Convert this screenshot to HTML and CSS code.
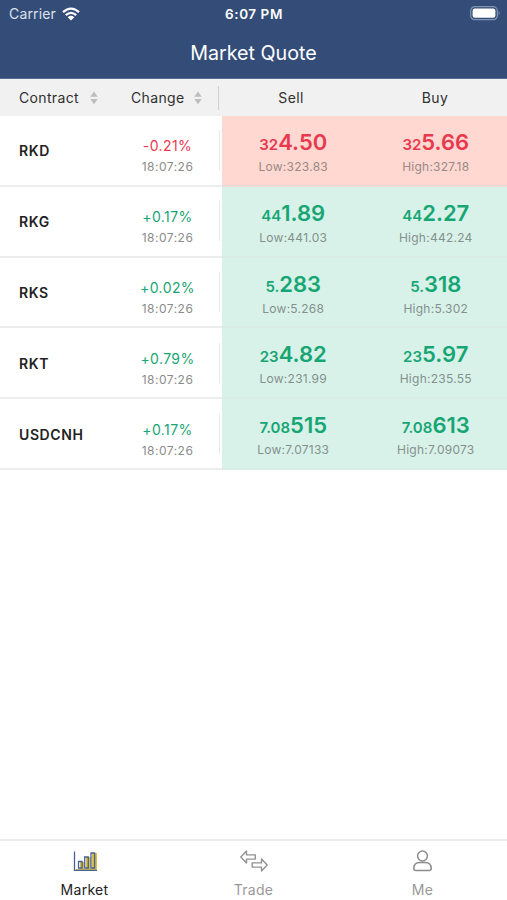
FILE: index.html
```
<!DOCTYPE html>
<html lang="en">
<head>
    <meta charset="UTF-8">
    <title>Market Quote</title>
    <meta name="viewport" content="width=device-width,initial-scale=1.0">
    <link rel="stylesheet" href="styles.css">
</head>
<body>
    <header class="header">
        <div class="status">
            <div class="carrier">
                <span>Carrier</span>
                <svg class="wifi" viewBox="0 0 18 14">
                    <path d="M1 5.2Q9-2 17 5.2M3.8 8.2Q9 3.6 14.2 8.2" fill="none" stroke="#fff" stroke-width="2.3"/>
                    <path d="M5.7 10.2Q9 7.4 12.3 10.2L9 13.6z" fill="#fff"/>
                </svg>
            </div>
            <div class="time">6:07 PM</div>
            <svg class="battery" viewBox="0 0 31 15">
                <rect x=".7" y=".7" width="26.6" height="13" rx="4" fill="none" stroke="#8294b5" stroke-width="1.2"/>
                <rect x="2.6" y="2.6" width="22.8" height="9.2" rx="2.2" fill="#fff"/>
                <path d="M28.6 5q2 2.2 0 4.4z" fill="#8294b5"/>
            </svg>
        </div>
        <h1 class="title">Market Quote</h1>
    </header>

    <div class="thead">
        <div class="th th-contract">Contract
            <svg class="sort" viewBox="0 0 8 14"><path d="M4 .5L7.7 5.8H.3zM4 13.2L.3 7.9h7.4z"/></svg>
        </div>
        <div class="th th-change">Change
            <svg class="sort" viewBox="0 0 8 14"><path d="M4 .5L7.7 5.8H.3zM4 13.2L.3 7.9h7.4z"/></svg>
        </div>
        <div class="th th-price">Sell</div>
        <div class="th th-price">Buy</div>
    </div>

    <ul class="list">
        <li class="row down">
            <div class="name">RKD</div>
            <div class="change"><p class="rate">-0.21%</p><p class="sub">18:07:26</p></div>
            <div class="prices">
                <div class="price"><p class="num"><small>32</small>4.50</p><p class="sub">Low:323.83</p></div>
                <div class="price"><p class="num"><small>32</small>5.66</p><p class="sub">High:327.18</p></div>
            </div>
        </li>
        <li class="row up">
            <div class="name">RKG</div>
            <div class="change"><p class="rate">+0.17%</p><p class="sub">18:07:26</p></div>
            <div class="prices">
                <div class="price"><p class="num"><small>44</small>1.89</p><p class="sub">Low:441.03</p></div>
                <div class="price"><p class="num"><small>44</small>2.27</p><p class="sub">High:442.24</p></div>
            </div>
        </li>
        <li class="row up">
            <div class="name">RKS</div>
            <div class="change"><p class="rate">+0.02%</p><p class="sub">18:07:26</p></div>
            <div class="prices">
                <div class="price"><p class="num"><small>5.</small>283</p><p class="sub">Low:5.268</p></div>
                <div class="price"><p class="num"><small>5.</small>318</p><p class="sub">High:5.302</p></div>
            </div>
        </li>
        <li class="row up">
            <div class="name">RKT</div>
            <div class="change"><p class="rate">+0.79%</p><p class="sub">18:07:26</p></div>
            <div class="prices">
                <div class="price"><p class="num"><small>23</small>4.82</p><p class="sub">Low:231.99</p></div>
                <div class="price"><p class="num"><small>23</small>5.97</p><p class="sub">High:235.55</p></div>
            </div>
        </li>
        <li class="row up">
            <div class="name">USDCNH</div>
            <div class="change"><p class="rate">+0.17%</p><p class="sub">18:07:26</p></div>
            <div class="prices">
                <div class="price"><p class="num"><small>7.08</small>515</p><p class="sub">Low:7.07133</p></div>
                <div class="price"><p class="num"><small>7.08</small>613</p><p class="sub">High:7.09073</p></div>
            </div>
        </li>
    </ul>

    <nav class="tabs">
        <a class="tab active">
            <svg class="icon" viewBox="0 0 28 24">
                <path d="M9 13h4v8H9zM15 8h5v13h-5zM21 4h5v17h-5zM5 20h21v2H5z" fill="#d9c04c"/>
                <path d="M3.5 2.5v18.8H26M7.5 19v-6.5h3.6V19zM13.7 19V8h3.6v11zM20 19V4h3.6v15z" fill="none" stroke="#4a6290" stroke-width="1.3"/>
            </svg>
            <span>Market</span>
        </a>
        <a class="tab">
            <svg class="icon" viewBox="0 0 28 24">
                <path d="M.8 8L6.5 2v3.9h8.8v4.2H6.5V14zM27.2 16L21.5 10v3.9h-9.3v4.2h9.3V22z" fill="none" stroke="#929292" stroke-width="1.4" stroke-linejoin="round"/>
            </svg>
            <span>Trade</span>
        </a>
        <a class="tab">
            <svg class="icon" viewBox="0 0 28 24">
                <circle cx="13.5" cy="7" r="4.9" fill="none" stroke="#8c8c8c" stroke-width="1.5"/>
                <path d="M4.8 19.6q0-6 6-6h5.4q6 0 6 6 0 2-2 2H6.8q-2 0-2-2z" fill="none" stroke="#8c8c8c" stroke-width="1.5"/>
            </svg>
            <span>Me</span>
        </a>
    </nav>
</body>
</html>
```
FILE: styles.css
```
* {
    box-sizing: border-box;
    margin: 0;
    padding: 0;
}

body {
    display: flex;
    flex-direction: column;
    height: 100vh;
    background: #fff;
    color: #303030;
    font-family: Inter, "Liberation Sans", sans-serif;
    font-size: 14px;
}

.header {
    height: 79px;
    background: #344d78;
    border-bottom: 1px solid #506c90;
    color: #fff;
}

.status {
    display: grid;
    grid-template-columns: 1fr auto 1fr;
    align-items: center;
    height: 27px;
    padding: 0 6px 0 9px;
}

.carrier {
    display: flex;
    align-items: center;
    gap: 6px;
    color: #dde2ea;
    letter-spacing: .15px;
}

.wifi {
    width: 18px;
    height: 14px;
}

.time {
    margin-right: 2px;
    font-size: 13.5px;
    font-weight: 600;
    letter-spacing: .55px;
}

.battery {
    width: 31px;
    height: 15px;
    justify-self: end;
}

.title {
    line-height: 52px;
    text-align: center;
    font-size: 19.7px;
    font-weight: 400;
}

.thead {
    display: flex;
    align-items: center;
    height: 37px;
    background: #f1f1f1;
}

.th {
    display: flex;
    align-items: center;
    height: 24px;
    letter-spacing: .35px;
}

.th-contract {
    width: 131px;
    padding-left: 19px;
    gap: 11px;
}

.th-change {
    width: 88px;
    gap: 9px;
    border-right: 1px solid #cfcfcf;
}

.th-price {
    flex: 1;
    justify-content: center;
}

.sort {
    width: 8px;
    height: 14px;
    fill: #bdbdbd;
}

.list {
    flex: 1;
    list-style: none;
}

.row {
    display: flex;
    align-items: center;
    height: 70.8px;
    border-bottom: 2px solid #ececec;
}

.name {
    width: 116px;
    padding: 1px 0 0 19px;
    font-weight: 600;
    letter-spacing: .6px;
    color: #222;
}

.change {
    width: 104px;
    height: 40px;
    border-right: 1px solid #e9e9e9;
    text-align: center;
}

.rate {
    padding-top: 5px;
    line-height: 21px;
    letter-spacing: .4px;
}

.sub {
    line-height: 21px;
    font-size: 12px;
    letter-spacing: .5px;
    color: #8b8b8b;
}

.prices {
    display: flex;
    flex: 1;
    height: 70.8px;
    margin: 0 0 -2px 2px;
    padding-top: 12px;
    border-bottom: 2px solid transparent;
}

.price {
    flex: 1;
    text-align: center;
}

.price .sub {
    letter-spacing: .25px;
    color: #84908c;
}

.num {
    line-height: 28px;
    height: 28px;
    font-size: 22px;
    font-weight: 600;
}

.num small {
    font-size: 15px;
}

.up .rate,
.up .num {
    color: #17a673;
}

.up .prices {
    background: #d8f2ea;
    border-bottom-color: #dbece7;
}

.down .rate,
.down .num {
    color: #e8394f;
}

.down .prices {
    background: #ffd8d1;
    border-bottom-color: #efd9d5;
}

.down .price .sub {
    color: #9a8885;
}

.tabs {
    display: flex;
    height: 61px;
    border-top: 2px solid #ececec;
}

.tab {
    display: flex;
    flex: 1;
    flex-direction: column;
    align-items: center;
    padding-top: 8px;
    gap: 7px;
    line-height: 20px;
    letter-spacing: .3px;
    color: #999;
}

.tab.active {
    color: #222;
}

.icon {
    width: 28px;
    height: 24px;
}
```
